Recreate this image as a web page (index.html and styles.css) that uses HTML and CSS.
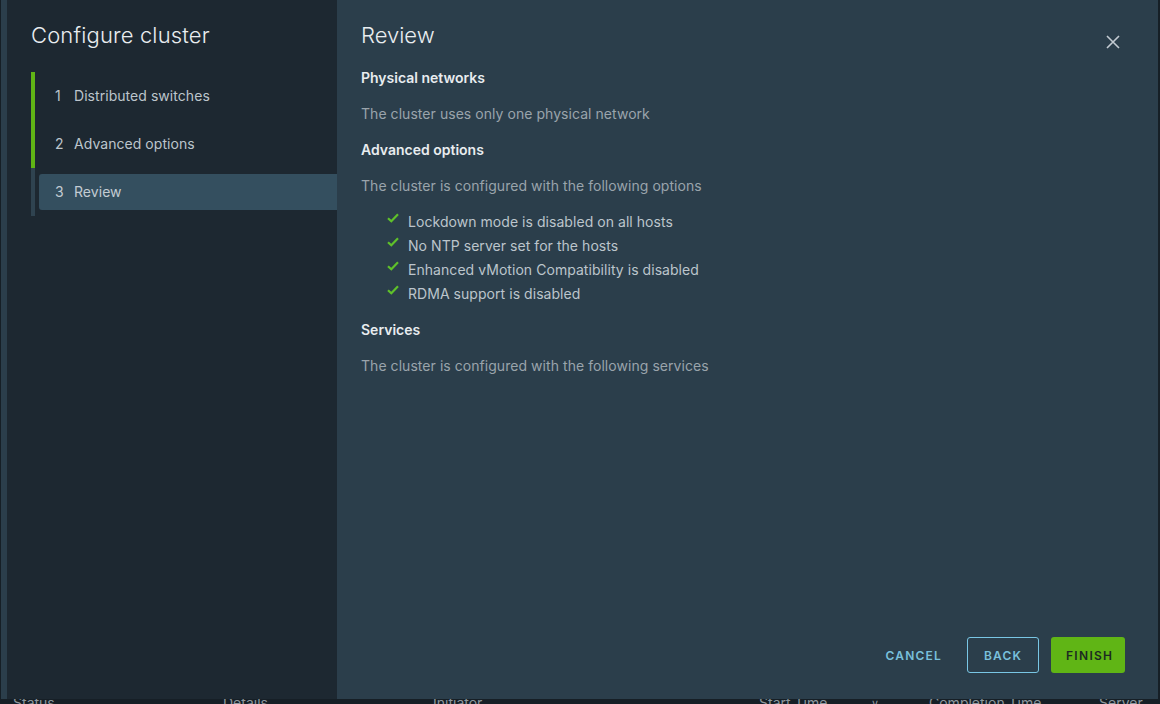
FILE: index.html
```html
<!DOCTYPE html>
<html>
<head>
<meta charset="utf-8">
<link rel="stylesheet" href="styles.css">
</head>
<body>
<div class="backdrop-page">
  <div class="table-head">
    <span class="col c-status">Status</span>
    <span class="col c-details">Details</span>
    <span class="col c-initiator">Initiator</span>
    <span class="col c-start">Start Time</span>
    <span class="col c-sort">&#8744;</span>
    <span class="col c-completion">Completion Time</span>
    <span class="col c-server">Server</span>
  </div>
</div>

<div class="modal">
  <aside class="sidebar">
    <h1 class="wizard-title">Configure cluster</h1>
    <ol class="steps">
      <li class="step done"><span class="step-inner"><span class="num">1</span>Distributed switches</span></li>
      <li class="step done"><span class="step-inner"><span class="num">2</span>Advanced options</span></li>
      <li class="step active"><span class="step-inner"><span class="num">3</span>Review</span></li>
    </ol>
  </aside>
  <main class="content">
    <div class="content-head">
      <h2 class="page-title">Review</h2>
      <button class="close" aria-label="Close">
        <svg width="14" height="14" viewBox="0 0 14 14"><path d="M1 1 L13 13 M13 1 L1 13" stroke="#c3cbd2" stroke-width="1.6" fill="none"/></svg>
      </button>
    </div>
    <div class="body">
      <h3 class="section">Physical networks</h3>
      <p class="desc">The cluster uses only one physical network</p>
      <h3 class="section">Advanced options</h3>
      <p class="desc">The cluster is configured with the following options</p>
      <ul class="checks">
        <li><svg class="ck" width="12" height="10" viewBox="0 0 12 10"><path d="M1 5.2 L4.3 8.3 L11 1.3" stroke="#5fc12a" stroke-width="2.2" fill="none"/></svg>Lockdown mode is disabled on all hosts</li>
        <li><svg class="ck" width="12" height="10" viewBox="0 0 12 10"><path d="M1 5.2 L4.3 8.3 L11 1.3" stroke="#5fc12a" stroke-width="2.2" fill="none"/></svg>No NTP server set for the hosts</li>
        <li><svg class="ck" width="12" height="10" viewBox="0 0 12 10"><path d="M1 5.2 L4.3 8.3 L11 1.3" stroke="#5fc12a" stroke-width="2.2" fill="none"/></svg>Enhanced vMotion Compatibility is disabled</li>
        <li><svg class="ck" width="12" height="10" viewBox="0 0 12 10"><path d="M1 5.2 L4.3 8.3 L11 1.3" stroke="#5fc12a" stroke-width="2.2" fill="none"/></svg>RDMA support is disabled</li>
      </ul>
      <h3 class="section services">Services</h3>
      <p class="desc">The cluster is configured with the following services</p>
    </div>
    <footer class="footer">
      <button class="btn btn-link">CANCEL</button>
      <button class="btn btn-outline">BACK</button>
      <button class="btn btn-primary">FINISH</button>
    </footer>
  </main>
</div>
</body>
</html>
```

FILE: styles.css
```css
* { box-sizing: border-box; }
html, body { margin: 0; padding: 0; }
body {
  width: 1160px;
  height: 704px;
  overflow: hidden;
  background: #161f26;
  font-family: "Inter", "Open Sans", sans-serif;
  position: relative;
}

.backdrop-page {
  height: 704px;
  display: flex;
  flex-direction: column;
  justify-content: flex-end;
}
.table-head {
  height: 10px;
  position: relative;
  color: #8e979e;
  font-size: 14px;
  line-height: 14px;
  overflow: hidden;
}
.col { position: absolute; top: 2px; }
.c-status { left: 13px; }
.c-details { left: 223px; }
.c-initiator { left: 433px; }
.c-start { left: 759px; }
.c-sort { left: 871px; font-size: 11px; }
.c-completion { left: 929px; }
.c-server { left: 1099px; }

.modal {
  position: absolute;
  left: 1px;
  top: 0;
  width: 1157px;
  height: 699px;
  background: #2b3e4b;
  display: flex;
  padding-left: 6px;
}

.sidebar {
  width: 330px;
  background: #1d2831;
  padding: 17px 0 0 24px;
  flex: none;
}
.wizard-title {
  margin: 0;
  font-size: 22px;
  font-weight: 300;
  line-height: 36px;
  color: #e9edf0;
  letter-spacing: 0.15px;
}
.steps {
  list-style: none;
  margin: 19px 0 0 0;
  padding: 0;
}
.step {
  height: 48px;
  border-left: 4px solid #60b515;
  display: flex;
  align-items: center;
  padding: 6px 0 6px 4px;
}
.step.active { border-left-color: #2f4350; }
.step-inner {
  flex: 1;
  height: 36px;
  display: flex;
  align-items: center;
  padding: 0 0 2px 16px;
  font-size: 14px;
  color: #bcc5cc;
  border-radius: 3px 0 0 3px;
  letter-spacing: 0.05px;
}
.step.active .step-inner { background: #344f5f; color: #c3ccd3; }
.num { width: 19px; }

.content {
  flex: 1;
  display: flex;
  flex-direction: column;
  padding: 18px 33px 26px 24px;
}
.content-head {
  display: flex;
  align-items: center;
  justify-content: space-between;
  height: 36px;
}
.page-title {
  margin: -2px 0 0 0;
  font-size: 22px;
  font-weight: 300;
  color: #e9edf0;
  line-height: 36px;
}
.close {
  background: none;
  border: 0;
  padding: 0;
  width: 14px;
  height: 14px;
  margin: 12px 5px 0 0;
  display: flex;
}
.body { flex: 1; }
.section {
  margin: 12px 0 0 0;
  font-size: 14px;
  font-weight: 600;
  line-height: 24px;
  color: #e8ecef;
}
.desc {
  margin: 12px 0 0 0;
  font-size: 14px;
  line-height: 24px;
  color: #9aa4ab;
  letter-spacing: 0.05px;
}
.checks {
  list-style: none;
  margin: 11px 0 0 0;
  padding: 0 0 0 26px;
}
.checks li {
  display: flex;
  align-items: center;
  height: 24px;
  font-size: 14px;
  color: #bcc5cc;
  letter-spacing: 0.05px;
}
.ck { margin: -6px 9px 0 0; flex: none; }
.services { margin-top: 13px; }

.footer {
  display: flex;
  justify-content: flex-end;
  align-items: center;
  gap: 12px;
}
.btn {
  height: 36px;
  font-family: "Inter", "Open Sans", sans-serif;
  font-size: 12px;
  font-weight: 600;
  letter-spacing: 1.2px;
  border-radius: 3px;
  padding: 0 14px;
  background: none;
  border: 1px solid transparent;
  cursor: pointer;
}
.btn-link { color: #79c0dc; padding-right: 11px; margin-right: 1px; }
.btn-outline { border-color: #79c6e4; color: #79c0dc; width: 72px; }
.btn-primary { background: #60b515; color: #1c2a22; width: 74px; letter-spacing: 1.3px; }
```
